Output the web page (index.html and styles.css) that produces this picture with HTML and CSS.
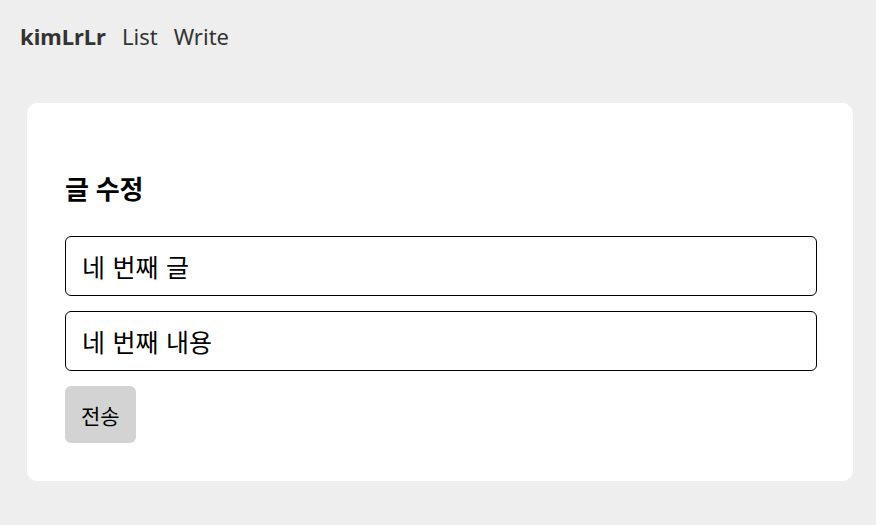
FILE: index.html
```html
<!DOCTYPE html>
<html lang="ko">
<head>
<meta charset="utf-8">
<link rel="stylesheet" href="styles.css">
</head>
<body>
<nav class="nav">
  <a class="brand">kimLrLr</a>
  <a class="link">List</a>
  <a class="link">Write</a>
</nav>
<main class="card">
  <h3 class="title">글 수정</h3>
  <form class="form">
    <input class="field" type="text" value="네 번째 글">
    <input class="field" type="text" value="네 번째 내용">
    <button class="submit" type="button">전송</button>
  </form>
</main>
</body>
</html>
```
FILE: styles.css
```css
html, body {
  margin: 0;
  padding: 0;
  background: #eeeeee;
  font-family: "Noto Sans", "Noto Sans CJK KR", sans-serif;
  color: #000;
}
.nav {
  display: flex;
  align-items: center;
  gap: 16px;
  height: 72px;
  padding: 0 20px;
}
.nav a {
  color: #333;
  font-size: 22px;
  text-decoration: none;
}
.brand {
  font-weight: 700;
}
.card {
  background: #fff;
  margin: 31px 23px 0 27px;
  border-radius: 10px;
  padding: 72px 36px 38px 38px;
}
.title {
  margin: 0 0 32px;
  font-size: 26px;
  line-height: 29px;
  font-weight: 700;
}
.form {
  display: flex;
  flex-direction: column;
  align-items: flex-start;
  gap: 15px;
}
.field {
  box-sizing: border-box;
  width: 100%;
  height: 60px;
  border: 1px solid #000;
  border-radius: 6px;
  padding: 0 16px;
  font-family: inherit;
  font-size: 25px;
  word-spacing: 1px;
  color: #000;
  background: #fff;
  outline: none;
}
.submit {
  height: 57px;
  padding: 0 16px;
  border: none;
  border-radius: 6px;
  background: #d3d3d3;
  font-family: inherit;
  font-size: 21px;
  color: #000;
}
```
